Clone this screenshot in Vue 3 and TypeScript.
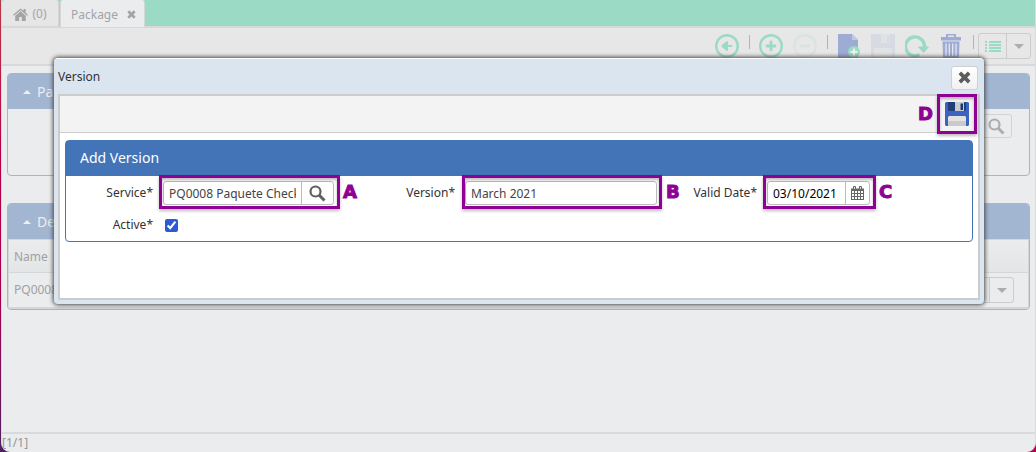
<script setup lang="ts">
import { ref } from 'vue'

const service = ref('PQ0008 Paquete Check Up')
const version = ref('March 2021')
const validDate = ref('03/10/2021')
const active = ref(true)
</script>

<template>
  <div class="desktop">
    <div class="shell">
      <nav class="tabs">
        <button class="tab home" type="button">
          <svg width="15" height="13" viewBox="0 0 15 13"><path d="M7.500.4 0 6.800l.8 1L7.500 2.200l6.700 5.600.8-1-2.300-2V.9h-2.200v2zM7.500 3.300 2.200 7.700V13h4V9h2.600v4h4V7.700z" fill="currentColor" /></svg>
          <span>(0)</span>
        </button>
        <button class="tab current" type="button">
          <span>Package</span>
          <svg width="9" height="9" viewBox="0 0 9 9"><path d="M1.300 1.300 7.700 7.700M7.700 1.300 1.300 7.700" stroke="currentColor" stroke-width="2.700" /></svg>
        </button>
      </nav>

      <div class="toolbar">
        <button class="tool green" type="button" aria-label="Back">
          <svg viewBox="0 0 24 24"><circle cx="12" cy="12" r="10.800" fill="none" stroke="currentColor" stroke-width="2.400" /><path d="M17.500 12H10M12 7 6.200 12l5.800 5z" fill="currentColor" stroke="currentColor" stroke-width="2.400" stroke-linejoin="round" stroke-linecap="round" transform="translate(2.400 2.400) scale(.8)" /></svg>
        </button>
        <i class="sep"></i>
        <button class="tool green" type="button" aria-label="Add">
          <svg viewBox="0 0 24 24"><circle cx="12" cy="12" r="10.800" fill="none" stroke="currentColor" stroke-width="2.400" /><path d="M12 8v8M8 12h8" stroke="currentColor" stroke-width="2.800" stroke-linecap="round" /></svg>
        </button>
        <button class="tool faint-green" type="button" aria-label="Remove" disabled>
          <svg viewBox="0 0 24 24"><circle cx="12" cy="12" r="10.800" fill="none" stroke="currentColor" stroke-width="2.400" /><path d="M8 12h8" stroke="currentColor" stroke-width="2.800" stroke-linecap="round" /></svg>
        </button>
        <i class="sep"></i>
        <button class="tool blue" type="button" aria-label="New record">
          <svg viewBox="0 0 24 24"><path d="M1 0h14l6 6v18H1z" fill="currentColor" /><path d="M15 0v6h6z" fill="#c0c9e4" /><circle cx="17" cy="18" r="6" fill="#9bdac3" /><path d="M17 14.500v7M13.500 18h7" stroke="#eef0f2" stroke-width="2" /></svg>
        </button>
        <button class="tool faint-blue" type="button" aria-label="Save record" disabled>
          <svg viewBox="0 0 24 24"><path d="M0 0h24v24H0z" fill="currentColor" /><path d="M10 0h9v9h-9zM3 14h18v10H3z" fill="#e1e2e4" /><path d="M16 2h2.500v6H16z" fill="currentColor" /></svg>
        </button>
        <button class="tool green" type="button" aria-label="Refresh">
          <svg viewBox="0 0 24 24"><path d="M14.500 20.800A9.500 9.500 0 1 1 19.500 13" fill="none" stroke="currentColor" stroke-width="3.400" /><path d="M13.500 13h10l-5 5.500z" fill="currentColor" stroke="currentColor" stroke-linejoin="round" /></svg>
        </button>
        <button class="tool blue" type="button" aria-label="Delete">
          <svg viewBox="0 0 24 24"><path d="M2 3h20v3.500H2zM7 0h10v3h-2V1.500H9V3H7z" fill="currentColor" /><path d="M3.500 7.500h17L20 24H4z" fill="currentColor" /><path d="M7 9.500V22M10.300 9.500V22M13.700 9.500V22M17 9.500V22" stroke="#e6e7ea" stroke-width="1.300" /></svg>
        </button>
        <i class="sep last"></i>
        <div class="split">
          <button class="split-main" type="button" aria-label="List view">
            <svg width="16" height="11" viewBox="0 0 16 11"><path d="M0 1h2M4 1h12M0 4h2M4 4h12M0 7h2M4 7h12M0 10h2M4 10h12" stroke="#9bdac3" stroke-width="2" /></svg>
          </button>
          <button class="split-arrow" type="button" aria-label="More views"><i class="down"></i></button>
        </div>
      </div>

      <main class="content">
        <section class="card package">
          <h2 class="card-title"><i class="up"></i>Pa</h2>
          <div class="card-body">
            <button class="lookup" type="button" aria-label="Look up package">
              <svg width="17" height="17" viewBox="0 0 17 17"><circle cx="6.500" cy="6.500" r="5" fill="none" stroke="currentColor" stroke-width="2.200" /><path d="m10 10 5.500 5.500" stroke="currentColor" stroke-width="3" /></svg>
            </button>
          </div>
        </section>
        <section class="card">
          <h2 class="card-title"><i class="up"></i>De</h2>
          <table class="grid">
            <thead><tr><th>Name</th><th aria-label="Options"></th></tr></thead>
            <tbody>
              <tr>
                <td>PQ0008</td>
                <td class="options">
                  <div class="split row-split">
                    <button class="split-main" type="button" aria-label="Open"></button>
                    <button class="split-arrow" type="button" aria-label="Row menu"><i class="down"></i></button>
                  </div>
                </td>
              </tr>
            </tbody>
          </table>
        </section>
      </main>

      <footer class="status">[1/1]</footer>
    </div>

    <div class="dialog" role="dialog" aria-labelledby="dialog-title">
      <header class="dialog-head">
        <h1 id="dialog-title">Version</h1>
        <button class="close" type="button" aria-label="Close">
          <svg width="13" height="13" viewBox="0 0 12 12"><path d="m1.700 1.700 8.600 8.600M10.300 1.700l-8.600 8.600" stroke="#5c5c5c" stroke-width="3.400" /></svg>
        </button>
      </header>
      <div class="dialog-body">
        <div class="dialog-tools">
          <div class="marked mark-d">
            <button class="save" type="button" aria-label="Save">
              <svg width="24" height="24" viewBox="0 0 24 24"><path d="M1 0h22l1 1v22l-1 1H1l-1-1V1z" fill="#3c63bd" /><path d="M3 0h8v9H4L3 8z" fill="#203f78" /><path d="M10 0h9v9h-9z" fill="#c9cbcf" /><path d="M19 0h2v8l-1 1h-1z" fill="#203f78" /><path d="M15.500 1.500H18V8h-2.500z" fill="#183873" /><path d="M4 14h16l1 1v9H3v-9z" fill="#e2e2e2" /><path d="M3 19h18v5H3z" fill="#cacaca" /></svg>
            </button>
            <b class="letter before">D</b>
          </div>
        </div>
        <form class="form" @submit.prevent>
          <h2 class="form-title">Add Version</h2>
          <div class="fields">
            <div class="field">
              <label for="service">Service*</label>
              <div class="marked mark-a">
                <div class="combo service">
                  <input id="service" v-model="service" type="text" />
                  <button type="button" aria-label="Look up service">
                    <svg width="17" height="17" viewBox="0 0 17 17"><circle cx="6.500" cy="6.500" r="5" fill="none" stroke="#5f5f5f" stroke-width="2.200" /><path d="m10 10 5.500 5.500" stroke="#5f5f5f" stroke-width="3" /></svg>
                  </button>
                </div>
                <b class="letter">A</b>
              </div>
            </div>
            <div class="field">
              <label for="version">Version*</label>
              <div class="marked mark-b">
                <div class="combo version"><input id="version" v-model="version" type="text" /></div>
                <b class="letter">B</b>
              </div>
            </div>
            <div class="field">
              <label for="valid-date">Valid Date*</label>
              <div class="marked mark-c">
                <div class="combo date">
                  <input id="valid-date" v-model="validDate" type="text" />
                  <button type="button" aria-label="Pick a date">
                    <svg width="13" height="14" viewBox="0 0 13 14"><path d="M0 2.500h13V14H0z" fill="#666" /><path d="M2.500.5h2v3h-2zM8.500.5h2v3h-2z" fill="#ddd" stroke="#666" /><path d="M1 5h2v2H1zM4 5h2v2H4zM7 5h2v2H7zM10 5h2v2h-2zM1 8h2v2H1zM4 8h2v2H4zM7 8h2v2H7zM10 8h2v2h-2zM1 11h2v2H1zM4 11h2v2H4zM7 11h2v2H7zM10 11h2v2h-2z" fill="#fff" /></svg>
                  </button>
                </div>
                <b class="letter">C</b>
              </div>
            </div>
            <div class="field">
              <label for="active">Active*</label>
              <input id="active" v-model="active" class="tick" type="checkbox" />
            </div>
          </div>
        </form>
      </div>
    </div>
  </div>
</template>

<style>
body {
  margin: 0;
}
</style>

<style scoped>
* {
  box-sizing: border-box;
}
.desktop {
  position: relative;
  min-height: 100vh;
  display: flex;
  padding-left: 1px;
  background: linear-gradient(to right, transparent 50%, #b7004f 50%), linear-gradient(#b83a48, #b3004a 35%, #a8004f 65%, #4a2062);
  font-family: "Noto Sans", "Open Sans", sans-serif;
  font-size: 12px;
  line-height: 16px;
  color: #333;
}
button {
  font: inherit;
  color: inherit;
  padding: 0;
  margin: 0;
  border: 0;
  background: none;
  display: flex;
  align-items: center;
  justify-content: center;
}
h1,
h2 {
  margin: 0;
  font-weight: 400;
}
.shell {
  flex: 1;
  display: flex;
  flex-direction: column;
  background: #ebecee;
  border-left: 1px solid #d9dadc;
  border-right: 1px solid #d9dadc;
  border-radius: 0 0 9px 9px;
  overflow: hidden;
}
.tabs {
  display: flex;
  gap: 1px;
  height: 28px;
  background: #9bdbc5;
  border-bottom: 2px solid #d7d8da;
}
.tab {
  height: 26px;
  padding-top: 2px;
  gap: 4px;
  color: #a3a4a6;
  background: #e6e6e7;
  border-right: 1px solid #d5d6d8;
  border-radius: 3px 3px 0 0;
}
.home {
  width: 57px;
}
.current {
  width: 85px;
  gap: 9px;
  height: 27px;
  padding-left: 2px;
  background: #ebecee;
  border-left: 1px solid #d5d6d8;
}
.toolbar {
  display: flex;
  align-items: center;
  justify-content: flex-end;
  gap: 10px;
  height: 38px;
  padding-right: 4px;
  background: #e7e7e7;
  border-bottom: 2px solid #d7d8da;
}
.tool {
  width: 24px;
  height: 24px;
}
.tool svg {
  width: 24px;
  height: 24px;
}
.green {
  color: #9bdac3;
}
.faint-green {
  color: #d9e4e0;
}
.blue {
  color: #9eabd5;
}
.faint-blue {
  color: #d7dae3;
}
.sep {
  width: 1px;
  height: 14px;
  margin: 0 -1px 8px 0;
  background: #b2b3b5;
}
.last {
  margin-right: -6px;
}
.split {
  display: flex;
  width: 53px;
  height: 26px;
  border: 1px solid #cbccce;
  border-radius: 3px;
}
.split-main {
  flex: 1;
}
.split-arrow {
  width: 24px;
  border-left: 1px solid #cbccce;
}
.down {
  border: 5px solid transparent;
  border-top-color: #acadaf;
  border-bottom: 0;
}
.up {
  border: 4px solid transparent;
  border-bottom-color: #eceef0;
  border-top: 0;
}
.content {
  flex: 1;
  display: flex;
  flex-direction: column;
  gap: 27px;
  padding: 7px 5px;
}
.card {
  border: 1px solid #a2b5d1;
  border-radius: 4px;
  overflow: hidden;
}
.package {
  height: 103px;
}
.card-title {
  display: flex;
  align-items: center;
  gap: 6px;
  height: 35px;
  padding-left: 15px;
  background: #a2b5d1;
  color: #eceef0;
  font-size: 14px;
  line-height: 20px;
}
.card-body {
  display: flex;
  justify-content: flex-end;
  padding: 5px 17px;
}
.lookup {
  width: 32px;
  height: 24px;
  color: #acadaf;
  border: 1px solid #d2d3d5;
  border-radius: 3px;
}
.grid {
  width: 100%;
  border-spacing: 0;
  color: #a0a1a3;
  border: 1px solid #d5d6d8;
  border-bottom-width: 2px;
}
.grid th {
  height: 33px;
  padding: 2px 5px 0;
  text-align: left;
  font-weight: 400;
  background: linear-gradient(#ebecee, #e4e5e6);
  border-bottom: 1px solid #d5d6d8;
}
.grid td {
  height: 34px;
  padding: 0 5px;
}
.grid .options {
  padding: 0 14px 0 0;
}
.row-split {
  margin-left: auto;
}
.status {
  height: 20px;
  border-top: 2px solid #d9dadc;
  line-height: 18px;
  color: #949597;
}
.dialog {
  position: absolute;
  top: 58px;
  left: 54px;
  right: 52px;
  height: 246px;
  display: flex;
  flex-direction: column;
  padding: 0 4px 4px;
  background: #dbe5ef;
  border-top: 1px solid #fff;
  border-radius: 4px;
  box-shadow: 0 0 4px 1px #444;
}
.dialog-head {
  display: flex;
  align-items: center;
  justify-content: space-between;
  height: 35px;
}
.dialog-head h1 {
  font-size: 12px;
}
.close {
  width: 27px;
  height: 24px;
  margin: 2px 2px 0 0;
  background: linear-gradient(#fff, #f1f1f1);
  border: 1px solid #d0d0d0;
  border-radius: 3px;
}
.dialog-body {
  flex: 1;
  background: #fff;
  border: 2px solid #ccc;
}
.dialog-tools {
  display: flex;
  justify-content: flex-end;
  height: 37px;
  padding: 6px 9px;
  background: #f3f3f3;
  border-bottom: 1px solid #ccc;
}
.form {
  margin: 7px 5px;
  border: 1px solid #4374b8;
  border-radius: 4px;
}
.form-title {
  height: 35px;
  padding-left: 14px;
  background: #4374b8;
  color: #fff;
  font-size: 14px;
  line-height: 34px;
}
.fields {
  display: grid;
  grid-template-columns: repeat(3, 1fr);
  grid-auto-rows: 32px;
  padding-top: 1px;
}
.field {
  display: flex;
  align-items: center;
  gap: 10px;
}
.field label {
  width: 87px;
  text-align: right;
}
.marked {
  position: relative;
}
.marked::after {
  content: "";
  position: absolute;
  inset: -6px -6px -4px -4px;
  border: 3px solid #8f0094;
  box-shadow: 0 2px 3px #0004, inset 0 2px 3px #0004;
  pointer-events: none;
}
.mark-b::after {
  inset: -6px -5px -4px -3px;
}
.mark-d {
  height: 24px;
}
.mark-d::after {
  inset: -8px;
}
.letter {
  position: absolute;
  top: 50%;
  left: 100%;
  margin: -11px 0 0 9px;
  font: 700 18px/20px "DejaVu Sans", sans-serif;
  color: #8f0094;
  -webkit-text-stroke: 1px #8f0094;
}
.before {
  left: auto;
  right: 100%;
  margin: -10px 12px 0 0;
}
.combo {
  display: flex;
  height: 24px;
  background: #fff;
  border: 1px solid #bbb;
  border-radius: 3px;
}
.combo input {
  flex: 1;
  min-width: 0;
  padding: 1px 5px 0;
  border: 0;
  background: none;
  font: inherit;
  color: #444;
  outline: none;
}
.combo button {
  border-left: 1px solid #bbb;
}
.service {
  width: 171px;
}
.service button {
  width: 32px;
}
.version {
  width: 192px;
}
.date {
  width: 103px;
}
.date .combo input,
.date input {
  color: #000;
}
.date button {
  width: 24px;
}
.tick {
  width: 13px;
  height: 13px;
  margin: 0 0 0 2px;
  accent-color: #2c5ad6;
}
</style>
